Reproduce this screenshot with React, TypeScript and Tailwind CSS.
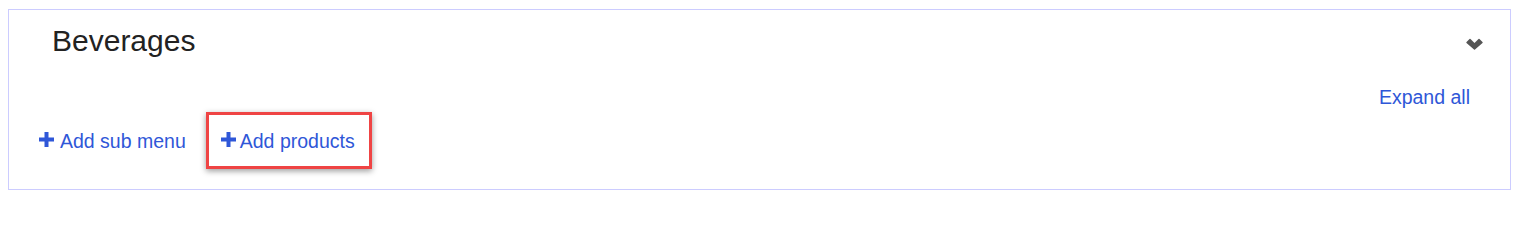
import React from 'react';

function PlusIcon() {
  return (
    <svg width="15" height="15" viewBox="0 0 15 15" className="shrink-0 mt-[-3px]">
      <rect x="5.5" y="0" width="4" height="15" fill="#2f57d8" />
      <rect x="0" y="5.5" width="15" height="4" fill="#2f57d8" />
    </svg>
  );
}

function ChevronDown() {
  return (
    <svg width="17" height="12" viewBox="0 0 17 12">
      <path fill="#555555" d="M0.5 4 L3.5 1 Q4 0.5 4.5 1 L8.5 5 L12.5 1 Q13 0.5 13.5 1 L16.5 4 Q17 4.5 16.5 5 L9 11.5 Q8.5 12 8 11.5 L0.5 5 Q0 4.5 0.5 4 Z" />
    </svg>
  );
}

export default function App() {
  return (
    <div className="bg-white w-[1520px] h-[203px] pt-[9px] pl-2 pr-[9px]" style={{ fontFamily: '"Liberation Sans", Arial, sans-serif' }}>
      <div className="border border-[#ccccff] h-[181px] flex flex-col">
        {/* header */}
        <div className="flex items-start justify-between pt-[15px] pl-[43px] pr-[27px]">
          <h2 className="text-[30px] leading-[32px] text-[#222222] font-normal">Beverages</h2>
          <div className="mt-[13px]">
            <ChevronDown />
          </div>
        </div>

        <div className="flex justify-end pr-[40px] mt-[29px]">
          <a className="text-[19.5px] leading-[22px] text-[#2f57d8] cursor-pointer">Expand all</a>
        </div>

        <div className="flex items-center pl-[30px] mt-[4px]">
          <a className="flex items-center gap-[6px] text-[19.5px] leading-[22px] text-[#2f57d8] cursor-pointer">
            <PlusIcon />
            Add sub menu
          </a>
          <div className="ml-[20px] border-[3px] border-[#ef4444] shadow-[0_2px_6px_rgba(0,0,0,0.4)] pl-[12px] pr-[14px] pt-[15px] pb-[14px]">
            <a className="flex items-center gap-[4px] text-[19.5px] leading-[22px] text-[#2f57d8] cursor-pointer">
              <PlusIcon />
              Add products
            </a>
          </div>
        </div>
      </div>
    </div>
  );
}
